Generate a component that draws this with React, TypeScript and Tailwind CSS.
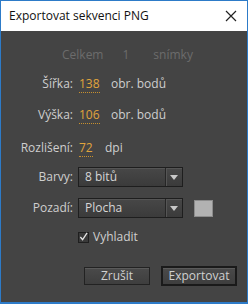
import React from "react";

const font = { fontFamily: "'Open Sans', 'Liberation Sans', sans-serif" };

const Value: React.FC<{ children: React.ReactNode }> = ({ children }) => (
  <span className="text-[#e0a43c] border-b border-dotted border-[#c8902e] leading-[14px]">
    {children}
  </span>
);

const Select: React.FC<{ label: string }> = ({ label }) => (
  <div className="w-[105px] h-[20px] flex border border-[#1e1e1e] bg-gradient-to-b from-[#474747] to-[#3b3b3b] shadow-[inset_0_1px_0_#555]">
    <div className="flex-1 pl-[6px] flex items-center text-[#d6d6d6]">{label}</div>
    <div className="w-[17px] flex items-center justify-center border-l border-[#262626] shadow-[inset_1px_0_0_#555]">
      <svg width="8" height="5" viewBox="0 0 8 5">
        <path d="M0 0h8L4 5z" fill="#c8c8c8" />
      </svg>
    </div>
  </div>
);

const App: React.FC = () => {
  return (
    <div
      className="w-[248px] h-[304px] flex flex-col border border-[#2d7bc8] border-b-2 bg-[#444444] text-[12px] text-[#cfcfcf]"
      style={font}
    >
      <div className="h-[30px] bg-white flex items-center justify-between pl-[8px] pr-[10px] text-[#111] text-[12px]">
        <span>Exportovat sekvenci PNG</span>
        <svg width="12" height="12" viewBox="0 0 12 12">
          <path d="M1 1l10 10M11 1L1 11" stroke="#222" strokeWidth="1.2" />
        </svg>
      </div>

      <div className="flex-1 flex flex-col">
        <div className="flex items-center h-[16px] mt-[16px] text-[#6c6c6c]">
          <span className="ml-[61px]">Celkem</span>
          <span className="ml-[19px]">1</span>
          <span className="ml-[24px]">snímky</span>
        </div>

        <div className="flex items-center h-[16px] mt-[13px]">
          <span className="w-[72px] text-right">Šířka:</span>
          <span className="ml-[6px] w-[32px]"><Value>138</Value></span>
          <span>obr. bodů</span>
        </div>

        <div className="flex items-center h-[16px] mt-[15px]">
          <span className="w-[72px] text-right">Výška:</span>
          <span className="ml-[6px] w-[32px]"><Value>106</Value></span>
          <span>obr. bodů</span>
        </div>

        <div className="flex items-center h-[16px] mt-[17px]">
          <span className="w-[72px] text-right">Rozlišení:</span>
          <span className="ml-[6px] w-[26px]"><Value>72</Value></span>
          <span>dpi</span>
        </div>

        <div className="flex items-center h-[20px] mt-[11px]">
          <span className="w-[72px] text-right">Barvy:</span>
          <div className="ml-[5px]"><Select label="8 bitů" /></div>
        </div>

        <div className="flex items-center h-[20px] mt-[11px]">
          <span className="w-[72px] text-right">Pozadí:</span>
          <div className="ml-[5px]"><Select label="Plocha" /></div>
          <div className="ml-[11px] w-[19px] h-[17px] bg-[#b2b2b2] border border-[#8c8c8c]" />
        </div>

        <div className="flex items-center h-[16px] mt-[11px] ml-[77px]">
          <div className="w-[11px] h-[11px] border border-[#1f1f1f] bg-[#3a3a3a] flex items-center justify-center">
            <svg width="10" height="10" viewBox="0 0 10 10">
              <path d="M1.5 5l2.5 3L9 0.5" stroke="#e6e6e6" strokeWidth="1.4" fill="none" />
            </svg>
          </div>
          <span className="ml-[4px]">Vyhladit</span>
        </div>

        <div className="flex items-center justify-end gap-[11px] mt-[21px] mr-[10px]">
          <button className="w-[66px] h-[18px] border border-[#222] bg-gradient-to-b from-[#4a4a4a] to-[#3e3e3e] shadow-[inset_0_1px_0_#5a5a5a] text-[#d0d0d0] leading-none">
            Zrušit
          </button>
          <button className="w-[76px] h-[20px] border-2 border-[#1a1a1a] bg-gradient-to-b from-[#4a4a4a] to-[#3e3e3e] shadow-[inset_0_1px_0_#5a5a5a] text-[#d0d0d0] leading-none">
            Exportovat
          </button>
        </div>
      </div>
    </div>
  );
};

export default App;
